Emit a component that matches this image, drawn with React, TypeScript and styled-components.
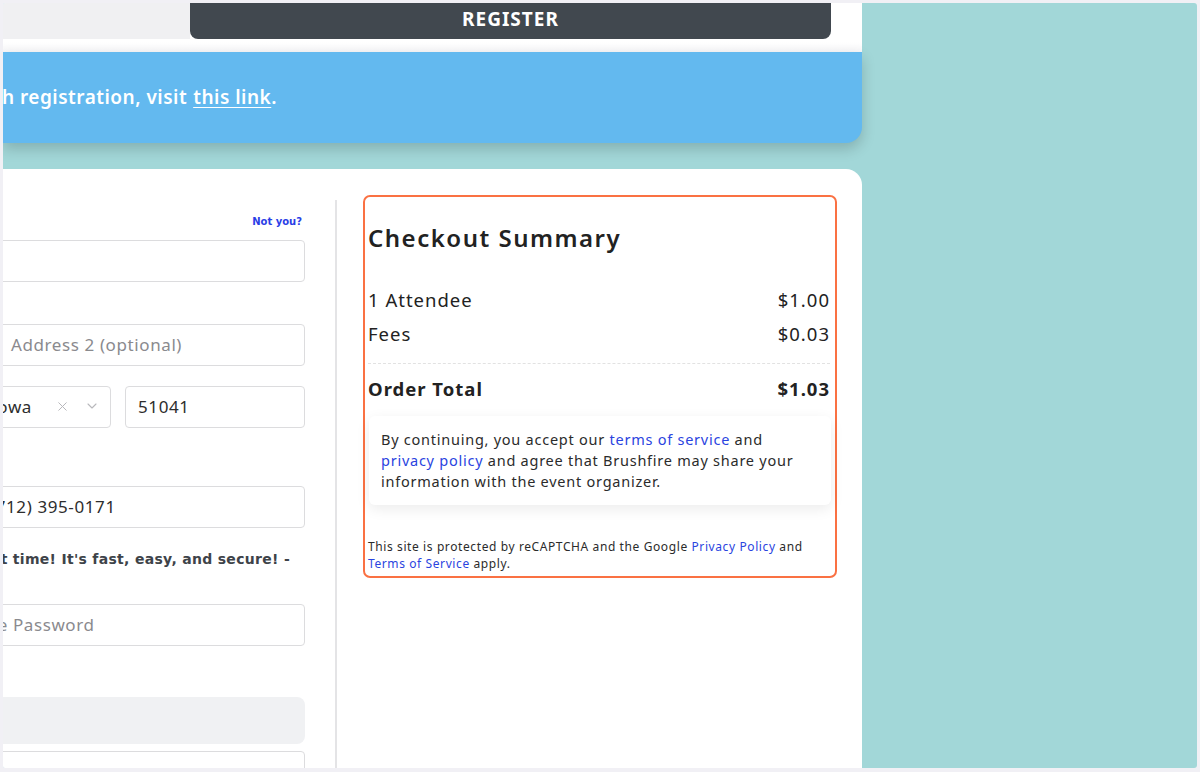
import styled, { createGlobalStyle } from 'styled-components'
import { X, ChevronDown } from 'lucide-react'

const GlobalStyle = createGlobalStyle`
  html, body {
    margin: 0;
    padding: 0;
    background: #f1f0f5;
  }
  body {
    font-family: "Noto Sans", "Open Sans", sans-serif;
    color: #222;
  }
`

const Frame = styled.div`
  margin: 3px 3px 4px 3px;
  height: 765px;
  background: #a2d7d8;
  border-radius: 3px;
  overflow: hidden;
  display: flex;
`

const Main = styled.div`
  width: 859px;
  flex-shrink: 0;
  display: flex;
  flex-direction: column;
`

const Header = styled.header`
  background: linear-gradient(#ffffff 80%, #f6f6f8);
  height: 49px;
`

const Tabs = styled.div`
  display: flex;
  height: 36px;
`

const Tab = styled.div<{ $active?: boolean; $width: number }>`
  width: ${p => p.$width}px;
  display: flex;
  align-items: center;
  justify-content: center;
  padding-bottom: 4px;
  box-sizing: border-box;
  background: ${p => (p.$active ? '#41484f' : '#f0f0f2')};
  color: #fff;
  font-size: 19px;
  font-weight: 700;
  letter-spacing: 1px;
  border-radius: ${p => (p.$active ? '0 0 8px 8px' : '0')};
`

const Banner = styled.div`
  height: 91px;
  background: #63b9ef;
  border-bottom-right-radius: 16px;
  box-shadow: 0 6px 14px rgba(0, 0, 0, 0.18);
  display: flex;
  align-items: center;
  justify-content: flex-end;
  padding: 0 585px 2px 0;
  box-sizing: border-box;
  color: #fff;
  font-size: 19px;
  font-weight: 600;
  letter-spacing: 0.5px;
  white-space: nowrap;
  position: relative;
  z-index: 1;

  a {
    color: #fff;
    text-decoration: underline;
    text-underline-offset: 3px;
    margin-left: 6px;
  }
`

const Spacer = styled.div`
  height: 26px;
  flex-shrink: 0;
`

const Card = styled.main`
  flex: 1;
  background: #fff;
  border-top-right-radius: 16px;
  display: flex;
  align-items: flex-start;
  padding-top: 26px;
  overflow: hidden;
`

const FormCol = styled.div`
  margin-left: -258px;
  width: 560px;
  flex-shrink: 0;
  display: flex;
  flex-direction: column;
`

const LabelRow = styled.div<{ $h: number }>`
  height: ${p => p.$h}px;
  display: flex;
  justify-content: space-between;
  align-items: flex-end;
  font-family: "DejaVu Sans", sans-serif;
  font-size: 14px;
  font-weight: 700;
  color: #333;
`

const NotYou = styled.a`
  font-family: "DejaVu Sans", sans-serif;
  font-size: 10px;
  font-weight: 700;
  color: #2a3ee6;
  line-height: 14px;
  margin-right: 3px;
  text-decoration: none;
`

const FieldRow = styled.div<{ $cols: string; $mt?: number }>`
  display: grid;
  grid-template-columns: ${p => p.$cols};
  gap: 14px;
  margin-top: ${p => p.$mt ?? 0}px;
`

const Input = styled.div<{ $placeholder?: boolean }>`
  height: 42px;
  box-sizing: border-box;
  border: 1px solid #dcdcde;
  border-radius: 4px;
  background: #fff;
  display: flex;
  align-items: center;
  padding: 0 12px 2px;
  font-size: 17px;
  letter-spacing: 0.6px;
  color: ${p => (p.$placeholder ? '#8a8a8e' : '#2d2d2d')};
  white-space: nowrap;
  overflow: hidden;
`

const Select = styled(Input)`
  justify-content: space-between;
  padding-right: 10px;
`

const SelectIcons = styled.span`
  display: flex;
  align-items: center;
  gap: 14px;
  color: #b8b8bc;
`

const Promo = styled.div`
  margin-top: 22px;
  height: 18px;
  display: flex;
  justify-content: flex-end;
  padding-right: 15px;
  font-family: "DejaVu Sans", sans-serif;
  font-size: 14px;
  font-weight: 700;
  line-height: 18px;
  letter-spacing: 0.3px;
  color: #3e4349;
  white-space: nowrap;
`

const GreyBox = styled.div`
  margin-top: 51px;
  height: 47px;
  background: #f0f1f3;
  border-radius: 8px;
`

const Divider = styled.div`
  width: 2px;
  background: #e4e4e6;
  margin: 5px 0 0 30px;
  align-self: stretch;
  flex-shrink: 0;
`

const Summary = styled.section`
  margin-left: 26px;
  width: 474px;
  flex-shrink: 0;
  box-sizing: border-box;
  border: 2px solid #fa7143;
  border-radius: 7px;
  padding: 0 5px 4px 3px;
`

const Title = styled.h2`
  margin: 25px 0 0;
  font-size: 24px;
  line-height: 32px;
  font-weight: 600;
  letter-spacing: 1.5px;
  color: #222;
`

const Line = styled.div<{ $bold?: boolean; $mt: number }>`
  display: flex;
  justify-content: space-between;
  align-items: center;
  height: 34px;
  margin-top: ${p => p.$mt}px;
  font-size: 18.5px;
  letter-spacing: 1px;
  font-weight: ${p => (p.$bold ? 700 : 400)};
  color: #222;
`

const Dashed = styled.div`
  margin-top: 13px;
  border-top: 1px dashed #e2e2e2;
`

const Consent = styled.div`
  margin: 11px -1px 0 1px;
  padding: 13px 12px;
  background: #fff;
  border-radius: 6px;
  box-shadow: 0 4px 14px rgba(0, 0, 0, 0.08);
  font-size: 14.5px;
  line-height: 21px;
  color: #2b2b2b;
  letter-spacing: 0.75px;

  a {
    color: #2a44e0;
    text-decoration: none;
  }
`

const Recaptcha = styled.p`
  margin: 33px 0 0;
  font-size: 12px;
  line-height: 17px;
  color: #2b2b2b;
  letter-spacing: 0.6px;

  a {
    color: #2a44e0;
    text-decoration: none;
  }
`

const App = () => {
  return (
    <>
      <GlobalStyle />
      <Frame>
        <Main>
          <Header>
            <Tabs>
              <Tab $width={187} />
              <Tab $width={641} $active>REGISTER</Tab>
            </Tabs>
          </Header>

          <Banner>
            For questions or help with registration, visit <a href="#">this link</a>.
          </Banner>

          <Spacer />

          <Card>
            <FormCol>
              <LabelRow $h={34}>
                <span>Your Information</span>
                <NotYou href="#">Not you?</NotYou>
              </LabelRow>
              <FieldRow $cols="1fr" $mt={11}>
                <Input>Test Attendee</Input>
              </FieldRow>

              <LabelRow $h={42}>
                <span>Address</span>
              </LabelRow>
              <FieldRow $cols="1fr 307px">
                <Input $placeholder>Address 1</Input>
                <Input $placeholder>Address 2 (optional)</Input>
              </FieldRow>

              <FieldRow $cols="1fr 133px 180px" $mt={20}>
                <Input>Sioux City</Input>
                <Select>
                  <span>Iowa</span>
                  <SelectIcons>
                    <X size={15} strokeWidth={1.6} />
                    <ChevronDown size={16} strokeWidth={1.6} />
                  </SelectIcons>
                </Select>
                <Input>51041</Input>
              </FieldRow>

              <LabelRow $h={58}>
                <span>Phone</span>
              </LabelRow>
              <FieldRow $cols="1fr 328px">
                <Input>United States (+1)</Input>
                <Input>(712) 395-0171</Input>
              </FieldRow>

              <Promo>Create an account for next time! It's fast, easy, and secure! -</Promo>

              <FieldRow $cols="1fr 366px" $mt={36}>
                <Input $placeholder>Email</Input>
                <Input $placeholder>Create Password</Input>
              </FieldRow>

              <GreyBox />

              <FieldRow $cols="1fr" $mt={7}>
                <Input $placeholder> </Input>
              </FieldRow>
            </FormCol>

            <Divider />

            <Summary>
              <Title>Checkout Summary</Title>
              <Line $mt={28}>
                <span>1 Attendee</span>
                <span>$1.00</span>
              </Line>
              <Line $mt={0}>
                <span>Fees</span>
                <span>$0.03</span>
              </Line>
              <Dashed />
              <Line $mt={7} $bold>
                <span>Order Total</span>
                <span>$1.03</span>
              </Line>
              <Consent>
                By continuing, you accept our <a href="#">terms of service</a> and{' '}
                <a href="#">privacy policy</a> and agree that Brushfire may share your
                information with the event organizer.
              </Consent>
              <Recaptcha>
                This site is protected by reCAPTCHA and the Google <a href="#">Privacy Policy</a> and{' '}
                <a href="#">Terms of Service</a> apply.
              </Recaptcha>
            </Summary>
          </Card>
        </Main>
      </Frame>
    </>
  )
}

export default App
